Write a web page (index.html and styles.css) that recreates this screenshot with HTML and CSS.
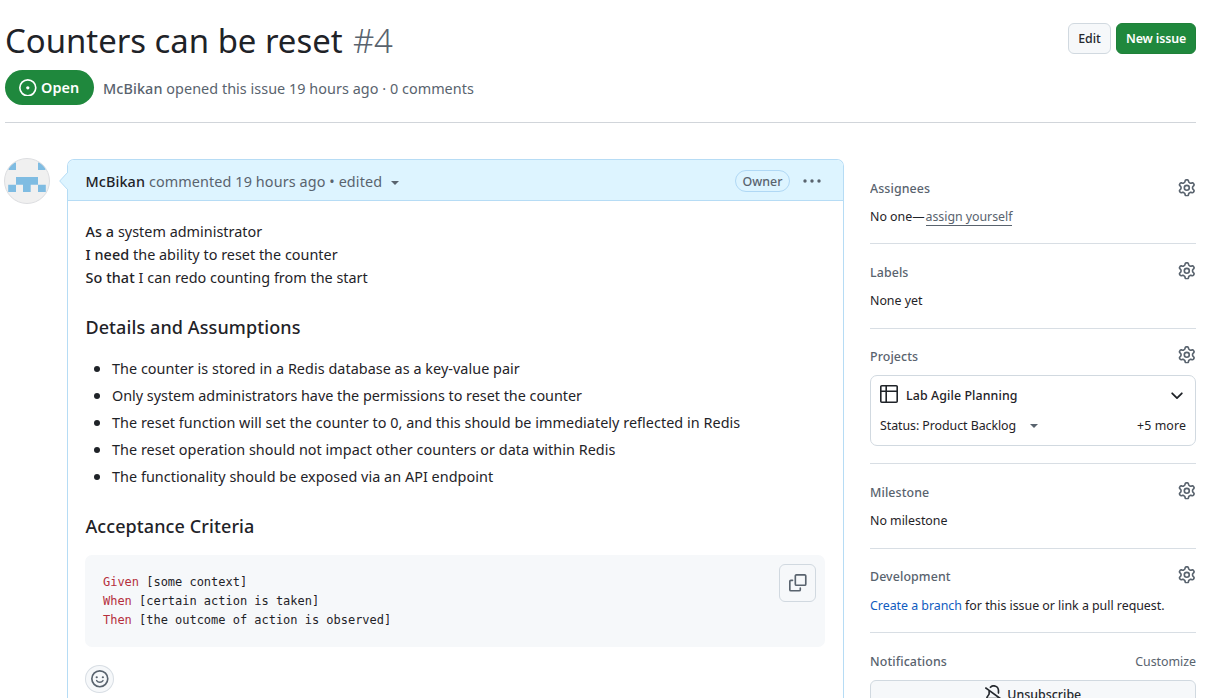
FILE: index.html
```html
<!DOCTYPE html>
<html lang="en">
<head>
<meta charset="utf-8">
<title>Counters can be reset #4</title>
<link rel="stylesheet" href="styles.css">
</head>
<body>
<svg class="defs" width="0" height="0">
  <symbol id="gear" viewBox="0 0 16 16"><path d="M8 0a8.2 8.2 0 0 1 .701.031C9.444.095 9.99.645 10.16 1.29l.288 1.107c.018.066.079.158.212.224.231.114.454.243.668.386.123.082.233.09.299.071l1.103-.303c.644-.176 1.392.021 1.82.63.27.385.506.792.704 1.218.315.675.111 1.422-.364 1.891l-.814.806c-.049.048-.098.147-.088.294.016.257.016.515 0 .772-.01.147.038.246.088.294l.814.806c.475.469.679 1.216.364 1.891a7.977 7.977 0 0 1-.704 1.217c-.428.61-1.176.807-1.82.63l-1.102-.302c-.067-.019-.177-.011-.3.071a5.909 5.909 0 0 1-.668.386c-.133.066-.194.158-.211.224l-.29 1.106c-.168.646-.715 1.196-1.458 1.26a8.006 8.006 0 0 1-1.402 0c-.743-.064-1.289-.614-1.458-1.26l-.289-1.106c-.018-.066-.079-.158-.212-.224a5.738 5.738 0 0 1-.668-.386c-.123-.082-.233-.09-.299-.071l-1.103.303c-.644.176-1.392-.021-1.82-.63a8.12 8.12 0 0 1-.704-1.218c-.315-.675-.111-1.422.363-1.891l.815-.806c.05-.048.098-.147.088-.294a6.214 6.214 0 0 1 0-.772c.01-.147-.038-.246-.088-.294l-.815-.806C.635 6.045.431 5.298.746 4.623a7.92 7.92 0 0 1 .704-1.217c.428-.61 1.176-.807 1.82-.63l1.102.302c.067.019.177.011.3-.071.214-.143.437-.272.668-.386.133-.066.194-.158.211-.224l.29-1.106C6.009.645 6.556.095 7.299.03 7.53.01 7.764 0 8 0Zm-.571 1.525c-.036.003-.108.036-.137.146l-.289 1.105c-.147.561-.549.967-.998 1.189-.173.086-.34.183-.5.29-.417.278-.97.423-1.529.27l-1.103-.303c-.109-.03-.175.016-.195.045-.22.312-.412.644-.573.99-.014.031-.021.11.059.19l.815.806c.411.406.562.957.53 1.456a4.709 4.709 0 0 0 0 .582c.032.499-.119 1.05-.53 1.456l-.815.806c-.081.08-.073.159-.059.19.162.346.353.677.573.989.02.03.085.076.195.046l1.102-.303c.56-.153 1.113-.008 1.53.27.161.107.328.204.501.29.447.222.85.629.997 1.189l.289 1.105c.029.109.101.143.137.146a6.6 6.6 0 0 0 1.142 0c.036-.003.108-.036.137-.146l.289-1.105c.147-.561.549-.967.998-1.189.173-.086.34-.183.5-.29.417-.278.97-.423 1.529-.27l1.103.303c.109.029.175-.016.195-.045.22-.313.411-.644.573-.99.014-.031.021-.11-.059-.19l-.815-.806c-.411-.406-.562-.957-.53-1.456a4.709 4.709 0 0 0 0-.582c-.032-.499.119-1.05.53-1.456l.815-.806c.081-.08.073-.159.059-.19a6.464 6.464 0 0 0-.573-.989c-.02-.03-.085-.076-.195-.046l-1.102.303c-.56.153-1.113.008-1.53-.27a4.44 4.44 0 0 0-.501-.29c-.447-.222-.85-.629-.997-1.189l-.289-1.105c-.029-.11-.101-.143-.137-.146a6.6 6.6 0 0 0-1.142 0ZM11 8a3 3 0 1 1-6 0 3 3 0 0 1 6 0ZM9.5 8a1.5 1.5 0 1 0-3.001.001A1.5 1.5 0 0 0 9.5 8Z"/></symbol>
</svg>

<header class="issue-header">
  <div class="title-row">
    <h1 class="title">Counters can be reset <span class="number">#4</span></h1>
    <div class="actions">
      <button class="btn btn-edit">Edit</button>
      <button class="btn btn-primary">New issue</button>
    </div>
  </div>
  <div class="meta">
    <span class="state"><svg class="icon-open" viewBox="0 0 16 16"><circle cx="8" cy="8" r="7.25" fill="none" stroke="currentColor" stroke-width="1.5"/><circle cx="8" cy="8" r="1.5" fill="currentColor"/></svg>Open</span>
    <span class="meta-text"><b>McBikan</b> opened this issue 19 hours ago · 0 comments</span>
  </div>
</header>

<div class="layout">
  <svg class="avatar" viewBox="0 0 46 46">
    <defs><clipPath id="round"><circle cx="23" cy="23" r="22.5"/></clipPath></defs>
    <circle cx="23" cy="23" r="22.5" fill="#f0f0f0"/>
    <path clip-path="url(#round)" fill="#7fbce2" d="M4.500 4.500H12V12H4.500ZM34 4.500h7.500V12H34ZM12 19h22v7.700h-7.300V34H19v-7.300h-7ZM4.200 26.700H12V34H4.200ZM34 26.700h7.800V34H34Z"/>
    <circle cx="23" cy="23" r="22.5" fill="none" stroke="#dcdde0"/>
  </svg>

  <main class="comment">
    <svg class="pointer" viewBox="0 0 9 18"><path d="M9 0 .7 9 9 18" fill="#ddf4ff" stroke="#b6dcf5"/></svg>
    <div class="comment-head">
      <span class="comment-by"><b>McBikan</b> commented 19 hours ago • edited</span>
      <span class="caret"></span>
      <span class="owner">Owner</span>
      <svg class="dots" viewBox="0 0 18 4"><circle cx="2" cy="2" r="1.7"/><circle cx="9" cy="2" r="1.7"/><circle cx="16" cy="2" r="1.7"/></svg>
    </div>
    <div class="comment-body">
      <p class="story"><b>As a</b> system administrator<br><b>I need</b> the ability to reset the counter<br><b>So that</b> I can redo counting from the start</p>
      <h3>Details and Assumptions</h3>
      <ul>
        <li>The counter is stored in a Redis database as a key-value pair</li>
        <li class="tight">Only system administrators have the permissions to reset the counter</li>
        <li>The reset function will set the counter to 0, and this should be immediately reflected in Redis</li>
        <li>The reset operation should not impact other counters or data within Redis</li>
        <li>The functionality should be exposed via an API endpoint</li>
      </ul>
      <h3>Acceptance Criteria</h3>
      <div class="code">
<pre><i>Given</i> [some context]
<i>When</i> [certain action is taken]
<i>Then</i> [the outcome of action is observed]</pre>
        <button class="copy"><svg viewBox="0 0 16 16"><path d="M0 6.75C0 5.784.784 5 1.75 5h1.5a.75.75 0 0 1 0 1.5h-1.5a.25.25 0 0 0-.25.25v7.5c0 .138.112.25.25.25h7.5a.25.25 0 0 0 .25-.25v-1.5a.75.75 0 0 1 1.5 0v1.5A1.75 1.75 0 0 1 9.25 16h-7.5A1.75 1.75 0 0 1 0 14.25ZM5 1.75C5 .784 5.784 0 6.75 0h7.5C15.216 0 16 .784 16 1.75v7.5A1.75 1.75 0 0 1 14.25 11h-7.5A1.75 1.75 0 0 1 5 9.25Zm1.75-.25a.25.25 0 0 0-.25.25v7.5c0 .138.112.25.25.25h7.5a.25.25 0 0 0 .25-.25v-7.5a.25.25 0 0 0-.25-.25Z"/></svg></button>
      </div>
      <button class="react"><svg viewBox="0 0 16 16"><circle cx="8" cy="8" r="7.25" fill="none" stroke="currentColor" stroke-width="1.5"/><circle cx="5.2" cy="6.6" r="1" fill="currentColor"/><circle cx="10.8" cy="6.6" r="1" fill="currentColor"/><path d="M5.1 9.6c.6.9 1.6 1.5 2.9 1.5s2.3-.6 2.900-1.5" fill="none" stroke="currentColor" stroke-width="1.3" stroke-linecap="round"/></svg></button>
    </div>
  </main>

  <aside class="sidebar">
    <section class="assignees">
      <div class="side-head"><h2>Assignees</h2><svg class="gear"><use href="#gear"/></svg></div>
      <p>No one—<a class="assign">assign yourself</a></p>
    </section>
    <section class="labels">
      <div class="side-head"><h2>Labels</h2><svg class="gear"><use href="#gear"/></svg></div>
      <p>None yet</p>
    </section>
    <section class="projects">
      <div class="side-head"><h2>Projects</h2><svg class="gear"><use href="#gear"/></svg></div>
      <div class="project">
        <div class="project-row">
          <svg class="table-icon" viewBox="0 0 18 18"><path d="M1.8.8h14.4a1 1 0 0 1 1 1v14.4a1 1 0 0 1-1 1H1.8a1 1 0 0 1-1-1V1.8a1 1 0 0 1 1-1ZM6.200.8v16.400M.8 6.200h16.400" fill="none" stroke="#1f2328" stroke-width="1.6"/></svg>
          <span class="project-name">Lab Agile Planning</span>
          <svg class="chevron" viewBox="0 0 12 8"><path d="M1.2 1.3 6 6.1l4.8-4.8" fill="none" stroke="#1f2328" stroke-width="1.8" stroke-linecap="round" stroke-linejoin="round"/></svg>
        </div>
        <div class="project-row status">
          <span>Status: Product Backlog</span><span class="caret"></span><span class="more">+5 more</span>
        </div>
      </div>
    </section>
    <section class="milestone">
      <div class="side-head"><h2>Milestone</h2><svg class="gear"><use href="#gear"/></svg></div>
      <p>No milestone</p>
    </section>
    <section class="development">
      <div class="side-head"><h2>Development</h2><svg class="gear"><use href="#gear"/></svg></div>
      <p><a class="link">Create a branch</a> for this issue or link a pull request.</p>
    </section>
    <section class="notifications">
      <div class="side-head"><h2>Notifications</h2><span class="customize">Customize</span></div>
      <button class="unsubscribe"><svg viewBox="0 0 16 16"><path d="m4.182 4.31.016.011 10.104 7.316.013.01 1.375.996a.75.75 0 1 1-.88 1.214L13.626 13H2.518a1.516 1.516 0 0 1-1.263-2.36l1.703-2.554A.255.255 0 0 0 3 7.947V5.305L.31 3.357a.75.75 0 1 1 .88-1.214Zm7.373 7.19L4.5 6.391v1.556c0 .346-.102.683-.294.97l-1.703 2.556a.017.017 0 0 0-.003.01c0 .005.002.009.005.012l.006.004.007.001ZM8 1.5c-.997 0-1.895.416-2.534 1.086A.75.75 0 1 1 4.38 1.55 5 5 0 0 1 13 5v2.373a.75.75 0 0 1-1.5 0V5A3.5 3.5 0 0 0 8 1.5ZM8 16a2 2 0 0 1-1.985-1.75c-.017-.137.097-.25.235-.25h3.5c.138 0 .252.113.235.25A2 2 0 0 1 8 16Z"/></svg>Unsubscribe</button>
    </section>
  </aside>
</div>
</body>
</html>
```
FILE: styles.css
```css
* { box-sizing: border-box; }
html { overflow: hidden; }
body {
  margin: 0;
  height: 698px;
  overflow: hidden;
  background: #fff;
  color: #1f2328;
  font: 400 14.4px/23px "Noto Sans", "Open Sans", sans-serif;
  letter-spacing: .04px;
}
h1, h2, h3, p, ul, pre { margin: 0; padding: 0; }
b { font-weight: 500; letter-spacing: .1px; }
button { font-family: inherit; padding: 0; }
svg { display: block; flex: none; fill: currentColor; }
.defs { position: absolute; }

.issue-header {
  margin: 0 28px 0 5px;
  height: 123px;
  padding-top: 19px;
  border-bottom: 1px solid #d1d5da;
}
.title-row { display: flex; justify-content: space-between; height: 51px; }
.title { font-weight: 400; font-size: 32.9px; line-height: 44px; letter-spacing: -.01px; white-space: nowrap; }
.number { margin-left: 2px; font-weight: 300; color: #59636e; letter-spacing: -.4px; }
.actions { display: flex; gap: 5px; padding-top: 4px; }
.btn {
  height: 31px;
  padding-top: 1px;
  border: 1px solid #d1d9e0;
  border-radius: 6px;
  background: #f6f8fa;
  color: #25292e;
  font-size: 12.4px;
  font-weight: 500;
  line-height: 28px;
}
.btn-edit { width: 43px; }
.btn-primary { width: 80px; background: #1f883d; border-color: #1f8139; color: #fff; font-weight: 600; letter-spacing: -.12px; }
.meta { display: flex; align-items: center; gap: 9px; color: #59636e; }
.meta-text { padding-top: 2px; }
.state {
  display: flex;
  align-items: center;
  gap: 4.500px;
  width: 89px;
  height: 35px;
  padding-left: 14px;
  border-radius: 18px;
  background: #1f883d;
  color: #fff;
  font-weight: 600;
}
.icon-open { width: 17.6px; height: 17.6px; }

.layout {
  display: grid;
  grid-template-columns: 46px 777px 326px;
  padding-left: 4px;
  column-gap: 17px;
}
.avatar { width: 46px; height: 46px; margin-top: 35px; }
.comment {
  position: relative;
  height: 539px;
  margin-top: 36px;
  border: 1px solid #b6dcf5;
  border-bottom: 0;
  border-radius: 7px 7px 0 0;
}
.pointer { position: absolute; left: -9px; top: 12px; width: 9px; height: 18px; }
.comment-head {
  display: flex;
  align-items: center;
  height: 41px;
  padding: 2px 22px 0 17.500px;
  border-bottom: 1px solid #b6dcf5;
  border-radius: 6px 6px 0 0;
  background: #ddf4ff;
  color: #59636e;
}
.comment-by { letter-spacing: .1px; }
.comment-head b { color: #1f2328; }
.caret { border: 4.5px solid transparent; border-top-color: #59636e; border-bottom: 0; }
.comment-head .caret { margin: 3px 0 0 9px; }
.owner {
  width: 55px;
  height: 22px;
  margin: -1px 13px 0 auto;
  border: 1px solid #b0d8f5;
  border-radius: 11px;
  font-size: 12.4px;
  font-weight: 500;
  line-height: 21px;
  text-align: center;
}
.dots { width: 18px; height: 4px; margin-top: -1px; }
.comment-body { padding: 19px 18px 0 17.4px; }
.comment-body h3 { font-size: 18px; font-weight: 500; line-height: 28px; letter-spacing: .1px; white-space: nowrap; }
.story { margin-bottom: 24px; letter-spacing: .01px; }
ul { list-style: none; display: grid; gap: 4px; margin: 16px 0 24px; }
li { display: flex; align-items: center; white-space: nowrap; }
li::before { content: ""; width: 6px; height: 6px; margin: 0 12px 0 8.6px; border-radius: 50%; background: #1f2328; }
.tight { letter-spacing: -.02px; }
.code {
  display: flex;
  justify-content: space-between;
  height: 92px;
  width: 740px;
  margin-top: 15px;
  padding: 9px 9px 0 17.6px;
  border-radius: 7px;
  background: #f6f8fa;
}
pre { padding-top: 9px; font: 12px/19px "DejaVu Sans Mono", monospace; letter-spacing: -.02px; }
pre i { font-style: normal; color: #b5303d; }
.copy {
  display: grid;
  place-items: center;
  width: 37px;
  height: 38px;
  border: 1px solid #d1d9e0;
  border-radius: 6px;
  background: #f6f8fa;
  color: #59636e;
}
.copy svg { width: 17.6px; height: 17.6px; }
.react {
  display: grid;
  place-items: center;
  width: 29px;
  height: 28px;
  margin-top: 18px;
  border: 1px solid #d8dee4;
  border-radius: 50%;
  background: #f6f8fa;
  color: #59636e;
}
.react svg { width: 17.6px; height: 17.6px; }

.sidebar { margin-left: 9px; width: 326px; height: 575px; overflow: hidden; padding-top: 36px; font-size: 12.4px; line-height: 20px; letter-spacing: -.02px; }
.sidebar section { border-bottom: 1px solid #d8dee4; padding-top: 18px; }
.side-head { display: flex; justify-content: space-between; height: 20px; color: #59636e; }
.side-head h2 { padding-top: 1px; font-size: 12.4px; font-weight: 500; line-height: 20px; letter-spacing: .1px; }
.gear { width: 17.6px; height: 17.6px; }
.sidebar p { margin-top: 9px; white-space: nowrap; }
.sidebar .assignees { height: 85px; padding-top: 19px; }
.assignees .gear { margin-top: 1px; }
.assign { display: inline-block; margin-left: 1px; height: 19px; border-bottom: 1px solid #59636e; color: #59636e; letter-spacing: -.04px; }
.sidebar .labels { height: 85px; }
.sidebar .projects { height: 135px; }
.projects .gear, .development .gear { margin-top: -1px; }
.projects h2 { padding-top: 0; }
.sidebar .milestone { height: 85px; }
.sidebar .development { height: 84px; }
.development h2 { padding-top: 0; }
.sidebar .notifications { border-bottom: 0; }
.customize { padding-top: 1px; }
.link { color: #0f5cc0; }
.project {
  height: 71px;
  margin-top: 8px;
  padding: 10px 9px 0;
  border: 1px solid #d1d9e0;
  border-radius: 7px;
}
.project-row { display: flex; align-items: center; height: 20px; }
.table-icon { width: 18px; height: 18px; margin-top: -4px; }
.project-name { margin-left: 8px; font-weight: 500; letter-spacing: .1px; }
.chevron { width: 12px; height: 8px; margin: 0 3px 0 auto; }
.status { margin-top: 10px; letter-spacing: -.06px; }
.status .caret { margin-left: 14px; }
.more { margin-left: auto; letter-spacing: .1px; }
.unsubscribe {
  display: flex;
  align-items: flex-start;
  justify-content: center;
  gap: 5px;
  width: 326px;
  height: 32px;
  margin-top: 9px;
  padding-top: 4px;
  border: 1px solid #d1d9e0;
  border-radius: 6px;
  background: #f6f8fa;
  color: #25292e;
  font-size: 12.4px;
  font-weight: 500;
  line-height: 20px;
}
.unsubscribe svg { width: 17.6px; height: 17.6px; }
```
